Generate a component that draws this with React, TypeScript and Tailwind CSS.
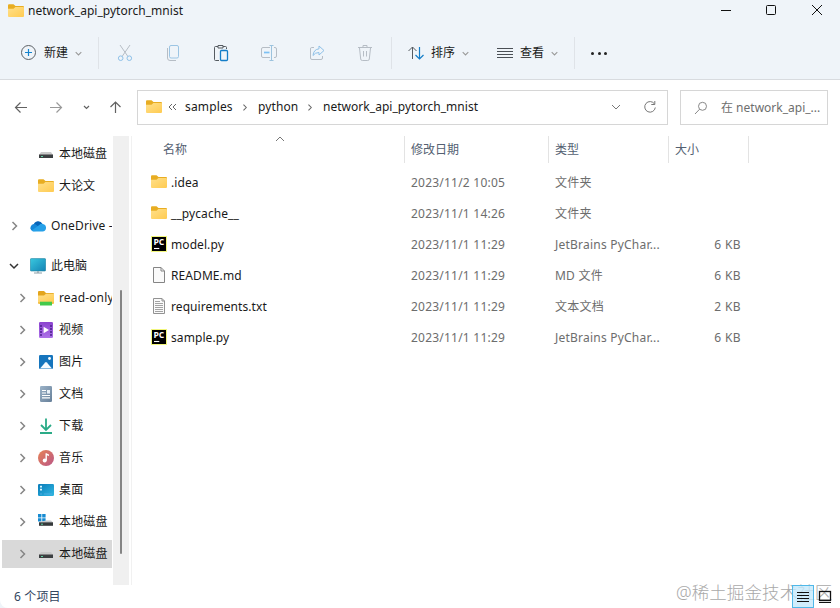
import type { ReactNode } from "react";

const files = [
  { icon: "folder", name: ".idea", date: "2023/11/2 10:05", type: "文件夹", size: "" },
  { icon: "folder", name: "__pycache__", date: "2023/11/1 14:26", type: "文件夹", size: "" },
  { icon: "pycharm", name: "model.py", date: "2023/11/1 11:29", type: "JetBrains PyChar...", size: "6 KB" },
  { icon: "file", name: "README.md", date: "2023/11/1 11:29", type: "MD 文件", size: "6 KB" },
  { icon: "text", name: "requirements.txt", date: "2023/11/1 11:29", type: "文本文档", size: "2 KB" },
  { icon: "pycharm", name: "sample.py", date: "2023/11/1 11:29", type: "JetBrains PyChar...", size: "6 KB" },
];

const pcItems = [
  { icon: "readonly", name: "read-only" },
  { icon: "video", name: "视频" },
  { icon: "image", name: "图片" },
  { icon: "document", name: "文档" },
  { icon: "download", name: "下载" },
  { icon: "music", name: "音乐" },
  { icon: "desktop", name: "桌面" },
  { icon: "system", name: "本地磁盘" },
  { icon: "disk", name: "本地磁盘", selected: true },
];

const icons: Record<string, ReactNode> = {
  folder: (
    <>
      <path d="M0 2.5Q0 1.2 1 1.2H5.5L7.5 3H15Q16 3 16 4V8H0Z" fill="#e8ad22" />
      <path d="M0 5.7H5.5L7.4 3.9H15.2Q16 3.9 16 4.7V13Q16 14 15 14H1Q0 14 0 13Z" fill="url(#folderFill)" />
    </>
  ),
  readonly: (
    <>
      <path d="M0 2Q0 1 1 1H6L8 3H15Q16 3 16 4V8H0Z" fill="#e3a51c" />
      <path d="M0 5.5H6L8 3.7H16V12H0Z" fill="url(#folderFill)" />
      <path d="M0 12H2V14H1Q0 14 0 13ZM14 12H16V13Q16 14 15 14H14Z" fill="#f2c14a" />
      <path d="M2 11.7H14V15.5H2Z" fill="#43c94b" />
    </>
  ),
  pycharm: (
    <>
      <rect width="16" height="16" fill="#f2f67c" />
      <rect x="1" y="1" width="14" height="14" fill="#000" />
      <path d="M3 12.5H8.3" stroke="#fff" strokeWidth="1.1" />
      <text x="2.4" y="8.5" fill="#fff" fontSize="8.6" fontWeight="700" fontFamily="Open Sans, sans-serif">PC</text>
    </>
  ),
  file: (
    <path d="M2.5.5H10L13.5 4V15.5H2.5ZM10 .5V4H13.5" fill="#fafafa" stroke="#858585" />
  ),
  text: (
    <>
      <path d="M2.5.5H11L13.5 3V15.5H2.5ZM11 .5V3H13.5" fill="#fafafa" stroke="#929292" />
      <path d="M4 3.5H9M4 5.5H12M4 7.5H12M4 9.5H12M4 11.5H12M4 13.5H12" stroke="#a3a3a3" />
    </>
  ),
  disk: (
    <>
      <path d="M3 6H13L15 9H1Z" fill="#c9c9c9" />
      <path d="M1 8.5H15V12H1Z" fill="#3c3f41" />
      <path d="M3 10.5H5" stroke="#5fd3a4" />
    </>
  ),
  system: (
    <>
      <path d="M0 0H3.4V3.4H0ZM4.2 0H7.6V3.4H4.2ZM0 4.2H3.4V7.6H0ZM4.2 4.2H7.6V7.6H4.2Z" fill="#168bd2" />
      <path d="M8 6.5H13L15 8.5H1V8Z" fill="#c6c9cb" />
      <path d="M1 8.3H15V11.8H1Z" fill="#35393b" />
      <path d="M3 10.2H5" stroke="#5fd3a4" />
    </>
  ),
  onedrive: (
    <>
      <path d="M3.6 7A4.7 4.7 0 0 1 12.4 5.8L7 11Z" fill="#0764b8" />
      <path d="M3 13.2A3.6 3.6 0 1 1 5.4 6.3L13.5 12.6Z" fill="#1587d8" />
      <path d="M1.6 12.4L9 7.2Q10.8 5.2 13 6A3.8 3.8 0 0 1 12.6 13.5H4Q2.4 13.5 1.6 12.4Z" fill="#26a0e8" />
    </>
  ),
  pc: (
    <>
      <rect x=".3" y=".6" width="15.4" height="12.4" rx="1" fill="url(#screenFill)" stroke="#2183a0" strokeWidth=".6" />
      <path d="M8 13V15M4 15H12" stroke="#8a9da7" strokeWidth="1.2" />
    </>
  ),
  video: (
    <>
      <rect x="1" width="14" height="16" rx="1.2" fill="url(#videoFill)" />
      <path d="M2 4H4M2 7H4M2 10H4M2 13H4M12 4H14M12 7H14M12 10H14M12 13H14" stroke="#49208a" strokeWidth="1.4" />
      <path d="M5.6 4.7V11.3L11 8Z" fill="#fff" />
    </>
  ),
  image: (
    <>
      <rect x="1" y="1" width="14" height="14" rx="1.2" fill="#1675bd" />
      <path d="M2 14.5L7.2 8.5Q8 7.7 8.8 8.5L14 14.5Z" fill="#f6fbff" />
      <circle cx="11.5" cy="4.5" r="1.4" fill="#fff" />
    </>
  ),
  document: (
    <>
      <rect x="2" width="12" height="16" rx="1.2" fill="url(#docFill)" />
      <path d="M4 4.5H8M4 7H8M4 9.5H12M4 11.8H12" stroke="#fff" strokeWidth="1.2" />
      <path d="M9 4H12V7.6H9Z" fill="#e9f1f8" />
    </>
  ),
  download: (
    <path d="M8 .5V11.5M3 7L8 12L13 7M2 15H14" fill="none" stroke="#2bab87" strokeWidth="1.8" />
  ),
  music: (
    <>
      <circle cx="8" cy="8" r="8" fill="url(#musicFill)" />
      <path d="M8.2 3.2V10.5M8.2 3.7Q9 5 11 5.2" fill="none" stroke="#fff" strokeWidth="1.4" />
      <circle cx="6.7" cy="10.6" r="2" fill="#fff" />
    </>
  ),
  desktop: (
    <>
      <rect y="2" width="16" height="12" rx="1.2" fill="url(#deskFill)" />
      <path d="M2 4.7H4M2 7.7H4" stroke="#d9f5ff" strokeWidth="1.7" />
      <path d="M2 12H4M6 12H14" stroke="#4cabe0" />
    </>
  ),
};

function Icon({ name }: { name: string }) {
  return (
    <svg viewBox="0 0 16 16" className="size-4 shrink-0">
      {icons[name]}
    </svg>
  );
}

function Gradients() {
  return (
    <svg className="absolute size-0">
      <defs>
        <linearGradient id="folderFill" x2="1" y2="1">
          <stop stopColor="#ffe08b" />
          <stop offset="1" stopColor="#ffcb51" />
        </linearGradient>
        <linearGradient id="screenFill" x2="1" y2="1">
          <stop stopColor="#39c8df" />
          <stop offset="1" stopColor="#1382b4" />
        </linearGradient>
        <linearGradient id="videoFill" x2="0" y2="1">
          <stop stopColor="#8b43cf" />
          <stop offset="1" stopColor="#ad72e8" />
        </linearGradient>
        <linearGradient id="docFill" x2="1" y2="1">
          <stop stopColor="#9cb3c8" />
          <stop offset="1" stopColor="#667f99" />
        </linearGradient>
        <linearGradient id="musicFill" x2="1" y2="1">
          <stop stopColor="#e78355" />
          <stop offset="1" stopColor="#ba5687" />
        </linearGradient>
        <linearGradient id="deskFill" x2="1" y2="1">
          <stop stopColor="#087bb9" />
          <stop offset="1" stopColor="#31b8e2" />
        </linearGradient>
      </defs>
    </svg>
  );
}

function Chevron({ down = false, className = "size-2.5" }: { down?: boolean; className?: string }) {
  return (
    <svg viewBox="0 0 10 10" fill="none" stroke="currentColor" className={`shrink-0 ${className}`}>
      <path d={down ? "M1 3L5 7L9 3" : "M3.5 1L7.5 5L3.5 9"} strokeWidth="1.5" />
    </svg>
  );
}

function TitleBar() {
  return (
    <div className="flex h-[22px] items-center pl-2">
      <Icon name="folder" />
      <span className="ml-1 grow tracking-[0.03px]">network_api_pytorch_mnist</span>
      <svg viewBox="0 0 120 22" fill="none" stroke="#111" className="h-[22px] w-[120px]">
        <path d="M1 10.5H11" />
        <rect x="46.5" y="5.5" width="9" height="9" rx="1" />
        <path d="M92 5L102 15M102 5L92 15" />
      </svg>
    </div>
  );
}

function ToolIcon({ children, className = "" }: { children: ReactNode; className?: string }) {
  return (
    <svg viewBox="0 0 18 18" fill="none" stroke="#b6bdc5" className={`size-[18px] shrink-0 ${className}`}>
      {children}
    </svg>
  );
}

function Toolbar() {
  return (
    <div className="flex h-[58px] items-center border-b border-[#d8dbdf] pt-[5px] pl-5">
      <ToolIcon>
        <circle cx="8.5" cy="8.5" r="7" stroke="#5c6166" />
        <path d="M8.5 5V12M5 8.5H12" stroke="#1683cd" strokeWidth="1.2" />
      </ToolIcon>
      <span className="ml-1.5 w-6 whitespace-nowrap">新建</span>
      <Chevron down className="ml-[7px] size-[7px] text-[#999]" />
      <div className="ml-[16px] h-8 w-px bg-[#dfe3e8]" />
      <div className="ml-[17px] flex gap-[30px]">
        <ToolIcon>
          <path d="M4 1L11.8 12.3M14 1L6.2 12.3" />
          <circle cx="4.7" cy="14.2" r="2.3" stroke="#8dc0e8" />
          <circle cx="13.3" cy="14.2" r="2.3" stroke="#8dc0e8" />
        </ToolIcon>
        <ToolIcon>
          <rect x="5.5" y="1.5" width="9" height="12.5" rx="1.5" stroke="#9cc5e4" />
          <path d="M3.5 4V14Q3.5 16.5 6 16.5H12" />
        </ToolIcon>
        <ToolIcon>
          <path d="M6 2.5H3.5Q2.5 2.5 2.5 3.5V15.5Q2.5 16.5 3.5 16.5H7M11 2.5H13.5Q14.5 2.5 14.5 3.5V5M6 1.5H11V4H6Z" stroke="#555b61" />
          <rect x="8.5" y="6.5" width="7" height="10" rx="1" stroke="#147dc8" strokeWidth="1.3" />
        </ToolIcon>
        <ToolIcon>
          <path d="M10 3.5H3Q1.5 3.5 1.5 5V12Q1.5 13.5 3 13.5H10M14 3.5H15Q16.5 3.5 16.5 5V12Q16.5 13.5 15 13.5H14" />
          <path d="M11.5 1.5V16.5M9.5 1.5H13.5M9.5 16.5H13.5" stroke="#9cc3de" />
          <path d="M4 8.5H9.5" stroke="#7dc0f3" strokeWidth="1.7" />
        </ToolIcon>
        <ToolIcon>
          <path d="M6 3.5H3.5Q2.5 3.5 2.5 5V14Q2.5 15.5 4 15.5H13Q14.5 15.5 14.5 14V12" />
          <path d="M11 2L16 6.5L11 11V8.5Q7 8.5 5 11.5Q5.5 5.5 11 4.8Z" stroke="#8fc1e8" />
        </ToolIcon>
        <ToolIcon>
          <path d="M2 3.5H16M7 3V1.5H11V3M3.5 4L4.7 15Q4.8 16.5 6.3 16.5H11.7Q13.2 16.5 13.3 15L14.5 4M7.5 7V12.5M10.5 7V12.5" />
        </ToolIcon>
      </div>
      <div className="ml-[17px] h-8 w-px bg-[#dfe3e8]" />
      <ToolIcon className="ml-[15px]">
        <path d="M5.5 15V3M1.5 7L5.5 3L9.5 7" stroke="#555b61" />
        <path d="M12.5 3V15M8.5 11L12.5 15L16.5 11" stroke="#147dc8" strokeWidth="1.2" />
      </ToolIcon>
      <span className="ml-[6px] w-6 whitespace-nowrap">排序</span>
      <Chevron down className="ml-[7px] size-[7px] text-[#999]" />
      <ToolIcon className="ml-[27px]">
        <path d="M1 4.5H17M1 7.5H17M1 10.5H17M1 13.5H17" stroke="#4a4f55" />
      </ToolIcon>
      <span className="ml-[6px] w-6 whitespace-nowrap">查看</span>
      <Chevron down className="ml-[7px] size-[7px] text-[#999]" />
      <div className="ml-4 h-8 w-px bg-[#dfe3e8]" />
      <div className="ml-4 flex gap-[3.5px]">
        <i className="size-[3px] rounded-full bg-[#222]" />
        <i className="size-[3px] rounded-full bg-[#222]" />
        <i className="size-[3px] rounded-full bg-[#222]" />
      </div>
    </div>
  );
}

function AddressBar() {
  return (
    <div className="flex h-14 items-center bg-white pr-3 pb-px">
      <svg viewBox="0 0 137 20" fill="none" stroke="#626262" className="h-5 w-[137px] shrink-0">
        <path d="M27 9.5H15.5M20.5 4.5L15.5 9.5L20.5 14.5" strokeWidth="1.2" />
        <path d="M50 9.5H61.5M56.5 4.5L61.5 9.5L56.5 14.5" stroke="#999" strokeWidth="1.2" />
        <path d="M84 8L86.5 10.5L89 8" strokeWidth="1.2" />
        <path d="M115.5 15V4M110.5 9L115.5 4L120.5 9" strokeWidth="1.2" />
      </svg>
      <div className="flex h-[35px] w-[531px] items-center border border-[#d6d6d6] pb-px pl-2">
        <Icon name="folder" />
        <svg viewBox="0 0 9 8" fill="none" stroke="#666" className="ml-[6px] h-2 w-[9px]">
          <path d="M4 1L1 4L4 7M8 1L5 4L8 7" />
        </svg>
        <span className="ml-2 w-[48px] tracking-[0.15px]">samples</span>
        <Chevron className="ml-2 size-[7px] text-[#666]" />
        <span className="ml-[10px] w-[40px] tracking-[0.1px]">python</span>
        <Chevron className="ml-2 size-[7px] text-[#666]" />
        <span className="ml-[10px] grow tracking-[0.03px]">network_api_pytorch_mnist</span>
        <svg viewBox="0 0 46 16" fill="none" stroke="#777" className="mr-[10px] h-4 w-[46px]">
          <path d="M1 6L5 10L9 6" />
          <path d="M43.5 5A5.3 5.3 0 1 0 44.3 8.5M43.8 2V5.5H40.3" />
        </svg>
      </div>
      <div className="ml-3 flex h-[35px] w-[148px] items-center border border-[#d6d6d6] pl-[13px] text-[#6e6e6e]">
        <svg viewBox="0 0 14 14" fill="none" stroke="#888" className="size-3.5">
          <circle cx="8.5" cy="5.3" r="4" />
          <path d="M5.6 8.2L1 13" />
        </svg>
        <span className="ml-[13px] whitespace-nowrap">在 network_api_...</span>
      </div>
    </div>
  );
}

function Sidebar() {
  return (
    <aside className="flex w-[132px] shrink-0 border-r border-[#f1f1f1]">
      <nav className="w-[112px] shrink-0 overflow-hidden pt-0.5 whitespace-nowrap">
        <div className="flex h-8 items-center pl-[38px]">
          <Icon name="disk" />
          <span className="ml-[5px]">本地磁盘</span>
        </div>
        <div className="flex h-8 items-center pl-[38px]">
          <Icon name="folder" />
          <span className="ml-[5px]">大论文</span>
        </div>
        <div className="mt-2 flex h-8 items-center pl-[9px]">
          <Chevron className="size-2.5 text-[#858585]" />
          <span className="ml-[11px] flex"><Icon name="onedrive" /></span>
          <span className="ml-[5px] tracking-[0.15px]">OneDrive -</span>
        </div>
        <div className="mt-2 flex h-8 items-center pl-[9px]">
          <Chevron down className="size-2.5 text-[#333]" />
          <span className="ml-[11px] flex"><Icon name="pc" /></span>
          <span className="ml-[5px]">此电脑</span>
        </div>
        <div className="flex flex-col gap-1 pt-0.5 pl-0.5">
          {pcItems.map((item, i) => (
            <div
              key={i}
              className={`flex h-7 items-center pl-[15px] ${item.selected ? "bg-[#d9d9d9]" : ""}`}
            >
              <Chevron className="size-2.5 text-[#858585]" />
              <span className="ml-[11px] flex"><Icon name={item.icon} /></span>
              <span className="ml-[5px] tracking-[0.15px]">{item.name}</span>
            </div>
          ))}
        </div>
      </nav>
      <div className="ml-px h-[449px] w-4 bg-[#f0f0f0] pt-[154px] pl-[7px]">
        <div className="h-[264px] w-0.5 rounded bg-[#858585]" />
      </div>
    </aside>
  );
}

function FileList() {
  return (
    <main className="relative grow">
      <svg viewBox="0 0 10 6" fill="none" stroke="#777" className="absolute top-0 left-[143px] h-1.5 w-2.5">
        <path d="M1 5L5 1L9 5" />
      </svg>
      <div className="flex h-[27px] items-center text-[#536071]">
        <span className="w-[272px] pl-[31px]">名称</span>
        <span className="flex h-full w-36 items-center border-l border-[#e3e3e3] pl-1.5">修改日期</span>
        <span className="flex h-full w-[120px] items-center border-l border-[#e3e3e3] pl-1.5">类型</span>
        <span className="flex h-full w-[81px] items-center border-x border-[#e3e3e3] pl-1.5">大小</span>
      </div>
      <div className="pt-1 text-[#6d6d6d]">
        {files.map((file) => (
          <div key={file.name} className="flex h-[31px] items-center">
            <span className="flex w-[272px] items-center pl-[19px] text-[#1a1a1a]">
              <span className="-mt-px flex"><Icon name={file.icon} /></span>
              <span className="ml-1 tracking-[0.08px]">{file.name}</span>
            </span>
            <span className="w-36 pl-[7px] tracking-[0.22px]">{file.date}</span>
            <span className="w-[120px] pl-[7px] tracking-[0.22px]">{file.type}</span>
            <span className="w-[73px] text-right tracking-[0.4px]">{file.size}</span>
          </div>
        ))}
      </div>
    </main>
  );
}

export default function App() {
  return (
    <div className="relative flex h-[608px] w-[840px] flex-col overflow-hidden bg-[#eff4f9] font-['Noto_Sans','Noto_Sans_CJK_SC',sans-serif] text-[12px] leading-4 text-[#1a1a1a]">
      <Gradients />
      <TitleBar />
      <Toolbar />
      <AddressBar />
      <div className="flex h-[449px] bg-white">
        <Sidebar />
        <FileList />
      </div>
      <footer className="flex grow items-center justify-between rounded-bl-lg bg-white pr-2 pl-3.5 text-[#34465f]">
        <span className="tracking-[0.15px]">6 个项目</span>
        <div className="relative z-10 flex items-center gap-1">
          <div className="flex h-[23px] w-[22px] items-center justify-center border border-[#50b8e8] bg-[#c4e9fb]/80">
            <svg viewBox="0 0 14 12" stroke="#111" className="h-3 w-3.5">
              <path d="M1 1.5H13M1 4.5H13M1 7.5H13M1 10.5H13" />
            </svg>
          </div>
          <svg viewBox="0 0 14 14" fill="none" stroke="#111" className="size-3.5">
            <rect x="1.5" y="1.5" width="11" height="9" strokeWidth="1.3" />
            <path d="M1 12.5H13" />
          </svg>
        </div>
      </footer>
      <span className="absolute top-[580px] left-[676px] text-[17.5px] leading-6 font-light tracking-[0.1px] whitespace-nowrap text-[#a9a9a9]">
        @稀土掘金技术社区
      </span>
    </div>
  );
}
